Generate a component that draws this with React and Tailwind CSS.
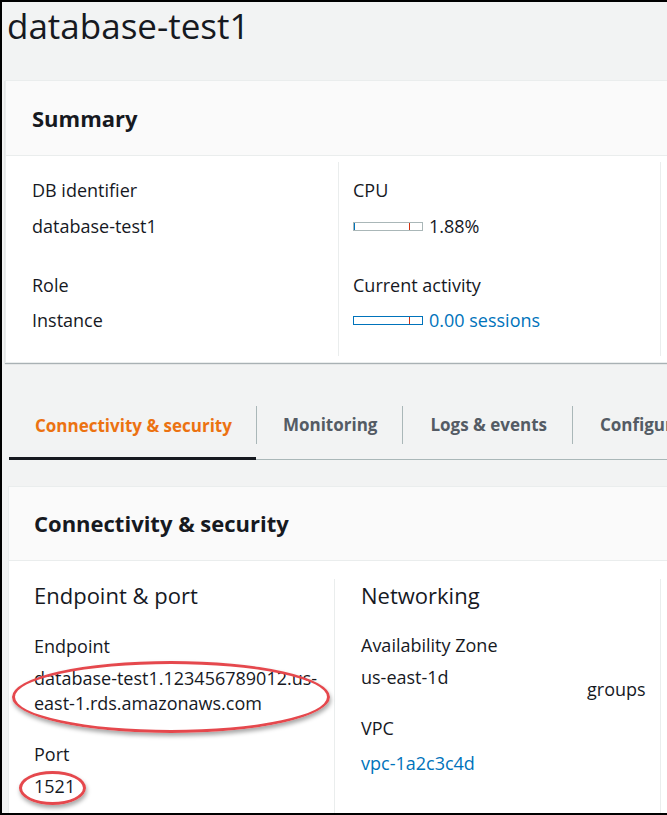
import React from "react";

const font = { fontFamily: '"Open Sans", "Noto Sans", sans-serif' };

function Bar({ blue, fill }) {
  return (
    <span
      className={`relative inline-block w-[70px] h-[9px] bg-white border ${
        blue ? "border-[#0073bb]" : "border-[#aab7b8]"
      }`}
    >
      {fill && <span className="absolute left-0 top-0 h-full w-[1px] bg-[#0073bb]" />}
      <span className="absolute left-[55px] top-0 h-full w-[1px] bg-[#d13212]" />
    </span>
  );
}

export default function App() {
  return (
    <div
      style={font}
      className="relative w-[667px] h-[815px] overflow-hidden bg-[#f2f3f3] border-t-2 border-l-2 border-b-2 border-black text-[#16191f]"
    >
      {/* Page title */}
      <h1 className="pl-[5px] pt-[2px] h-[78px] text-[35px] leading-[44px] font-normal">database-test1</h1>

      {/* Summary card */}
      <div className="ml-[3px] w-[900px] bg-white border border-[#eaeded] shadow-[0_1px_1px_rgba(0,28,36,0.3)]">
        <div className="h-[75px] flex items-center pl-[26px] bg-[#fafafa] border-b border-[#eaeded]">
          <h2 className="text-[22px] font-bold">Summary</h2>
        </div>
        <div className="flex py-[6px]">
          <div className="w-[332px] pl-[26px] pt-[16px] pb-[24px] text-[18px] leading-[24px]">
            <div>DB identifier</div>
            <div className="mt-[12px]">database-test1</div>
            <div className="mt-[35px]">Role</div>
            <div className="mt-[11px]">Instance</div>
          </div>
          <div className="w-[322px] border-l border-[#eaeded] pl-[14px] pt-[16px] text-[18px] leading-[24px]">
            <div>CPU</div>
            <div className="mt-[12px] flex items-center gap-[6px]">
              <Bar fill />
              <span>1.88%</span>
            </div>
            <div className="mt-[35px]">Current activity</div>
            <div className="mt-[11px] flex items-center gap-[6px] text-[#0073bb]">
              <Bar blue />
              <span>0.00 sessions</span>
            </div>
          </div>
          <div className="flex-1 border-l border-[#eaeded]" />
        </div>
      </div>

      {/* Tabs */}
      <div className="ml-[7px] mt-[28px] w-[760px] flex items-center border-b border-[#aab7b8] text-[17px] font-bold whitespace-nowrap">
        <div className="shrink-0 h-[68px] flex items-center pl-[26px] pr-[24px] pt-[3px] text-[#ec7211] border-b-[3px] border-[#16191f] -mb-px">
          Connectivity &amp; security
        </div>
        <div className="shrink-0 w-px h-[38px] bg-[#aab7b8]" />
        <div className="shrink-0 h-[68px] flex items-center pl-[26px] pr-[25px] text-[#545b64]">Monitoring</div>
        <div className="shrink-0 w-px h-[38px] bg-[#aab7b8]" />
        <div className="shrink-0 h-[68px] flex items-center pl-[27px] pr-[25px] text-[#545b64]">Logs &amp; events</div>
        <div className="shrink-0 w-px h-[38px] bg-[#aab7b8]" />
        <div className="shrink-0 h-[68px] flex items-center px-[27px] text-[#545b64]">Configuration</div>
      </div>

      {/* Connectivity card */}
      <div className="ml-[6px] mt-[26px] w-[900px] bg-white border border-[#eaeded]">
        <div className="h-[74px] flex items-center pl-[25px] bg-[#fafafa] border-b border-[#eaeded]">
          <h2 className="text-[22px] font-bold">Connectivity &amp; security</h2>
        </div>
        <div className="flex pt-[18px] h-[300px]">
          <div className="w-[325px] pl-[25px] text-[18px] leading-[25px]">
            <div className="text-[22px] leading-[32px]">Endpoint &amp; port</div>
            <div className="mt-[23px]">Endpoint</div>
            <div className="mt-[7px]">database-test1.123456789012.us-</div>
            <div>east-1.rds.amazonaws.com</div>
            <div className="mt-[26px]">Port</div>
            <div className="mt-[7px]">1521</div>
          </div>
          <div className="w-[326px] border-l border-[#eaeded] pl-[26px] flex text-[18px] leading-[25px]">
            <div className="w-[226px]">
              <div className="text-[22px] leading-[32px]">Networking</div>
              <div className="mt-[22px]">Availability Zone</div>
              <div className="mt-[7px]">us-east-1d</div>
              <div className="mt-[26px]">VPC</div>
              <div className="mt-[10px] text-[#0073bb]">vpc-1a2c3c4d</div>
            </div>
            <div className="pt-[98px]">groups</div>
          </div>
          <div className="flex-1 border-l border-[#eaeded]" />
        </div>
      </div>

      {/* Annotation ellipses */}
      <div className="absolute left-[10px] top-[659px] w-[318px] h-[72px] rounded-[50%] border-[3px] border-[#e5484d] shadow-[1px_3px_4px_rgba(0,0,0,0.35)]" />
      <div className="absolute left-[17px] top-[769px] w-[67px] h-[34px] rounded-[50%] border-[3px] border-[#e5484d] shadow-[1px_3px_4px_rgba(0,0,0,0.35)]" />
    </div>
  );
}
